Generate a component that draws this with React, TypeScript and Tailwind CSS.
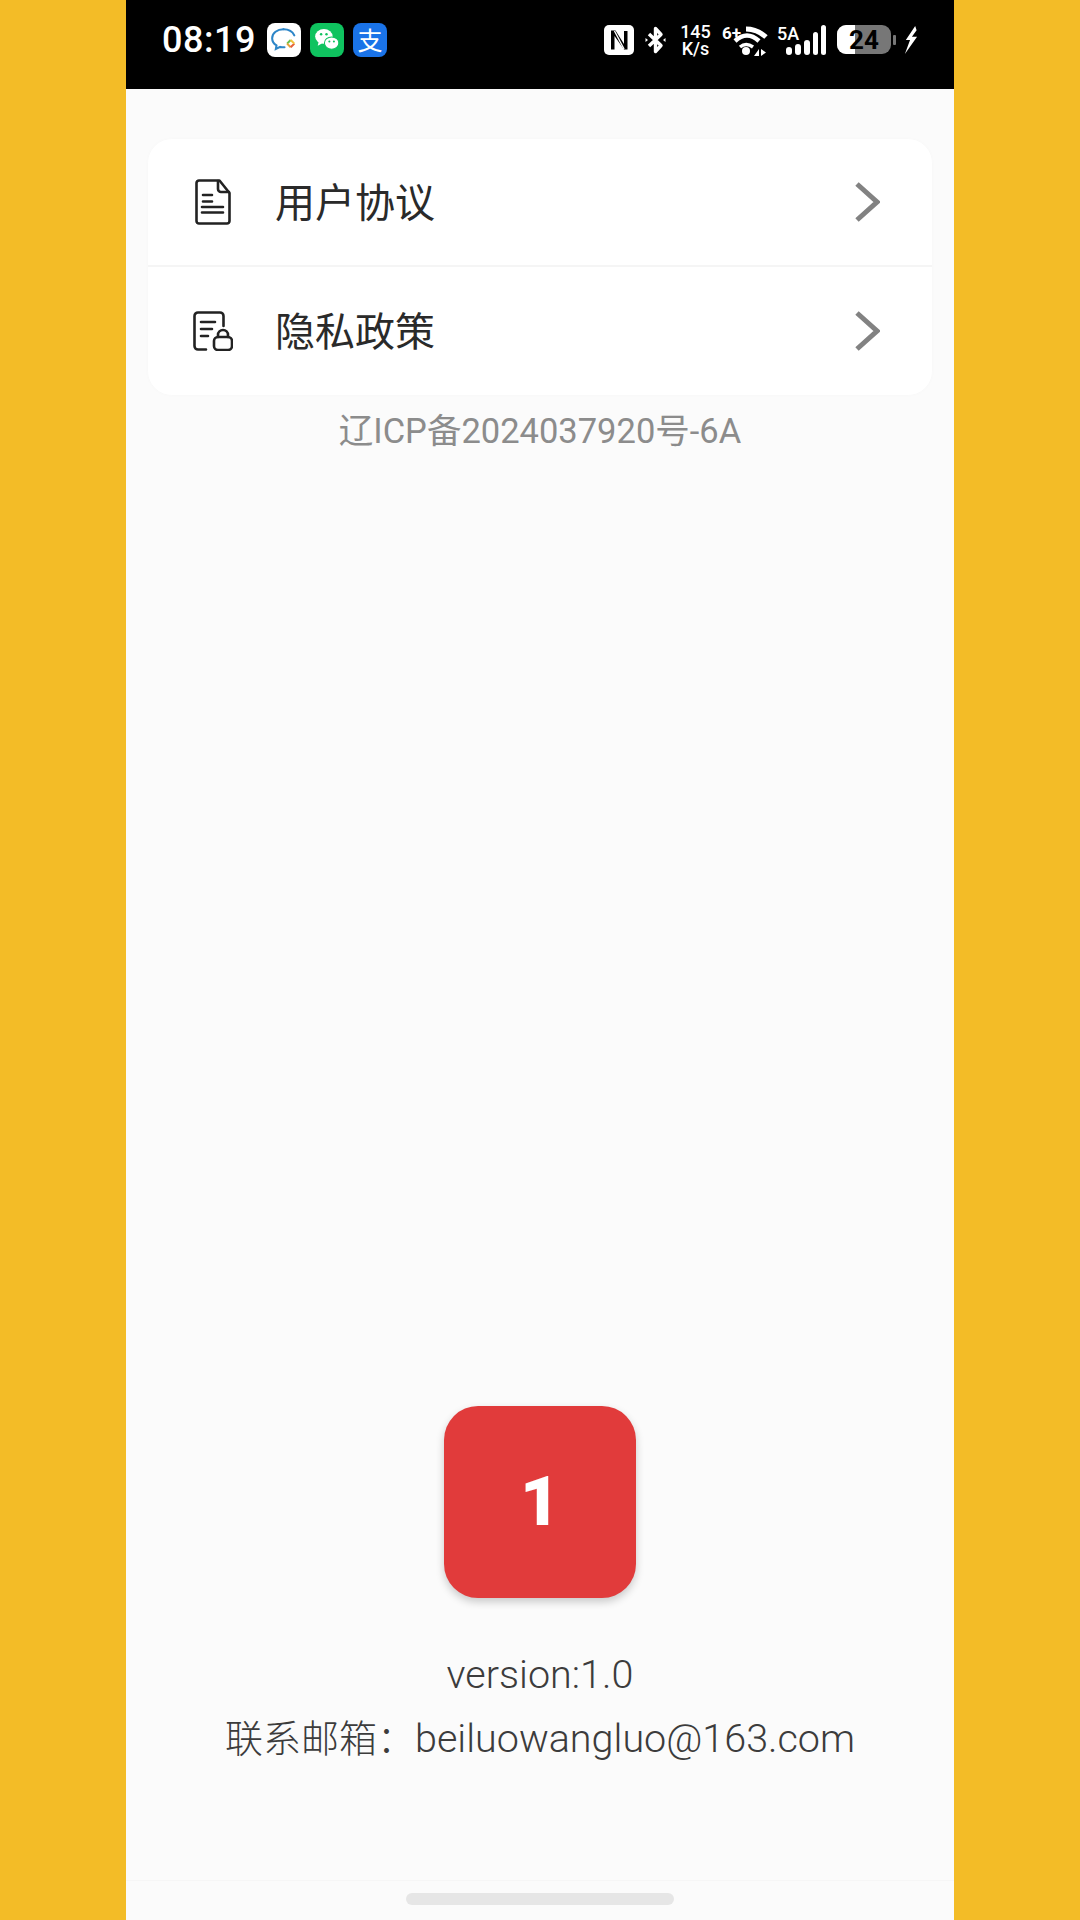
const cjk = "font-['Roboto','Noto_Sans_CJK_SC',sans-serif]";

function ChatApp() {
  return (
    <div className="w-[34px] h-[34px] rounded-[8px] bg-white">
      <svg viewBox="0 0 33 33" className="w-[34px] h-[34px]">
        <path d="M16 6c-6 0-11 3.600-11 8.800 0 3 1.700 5.400 4.200 7l-.6 3.400 4.200-2c1.300.3 2.700.4 4.200.4" fill="none" stroke="#2d86c8" strokeWidth="2" strokeLinecap="round" />
        <path d="M16 6c5 0 9 2.500 10.500 6" fill="none" stroke="#2d86c8" strokeWidth="2" strokeLinecap="round" />
        <path d="M23 16.500l-3.500 3.500" stroke="#6cc04a" strokeWidth="2" />
        <path d="M19.500 20l3.500 3.500" stroke="#e8a33a" strokeWidth="2" />
        <path d="M23 23.500l3.500-3.500" stroke="#e5603a" strokeWidth="2" />
        <path d="M26.500 20L23 16.500" stroke="#f0c43a" strokeWidth="2" />
      </svg>
    </div>
  );
}

function WeChatApp() {
  return (
    <div className="w-[34px] h-[34px] rounded-[8px] bg-[#0fc35f]">
      <svg viewBox="0 0 33 33" className="w-[34px] h-[34px]">
        <ellipse cx="13.500" cy="13" rx="8.500" ry="7.200" fill="#fff" />
        <path d="M8.500 18l-1 4 4-2z" fill="#fff" />
        <ellipse cx="21" cy="19.500" rx="7" ry="6" fill="#fff" stroke="#0fc35f" strokeWidth="1" />
        <circle cx="10.800" cy="11" r="1.200" fill="#0fc35f" />
        <circle cx="16" cy="11" r="1.200" fill="#0fc35f" />
        <circle cx="18.800" cy="18" r="1" fill="#0fc35f" />
        <circle cx="23.200" cy="18" r="1" fill="#0fc35f" />
      </svg>
    </div>
  );
}

function AlipayApp() {
  return (
    <div className="w-[34px] h-[34px] rounded-[8px] bg-[#1a73e8] flex items-center justify-center text-white text-[25px] leading-none font-['Noto_Sans_CJK_SC',sans-serif]">
      支
    </div>
  );
}

function NfcIcon() {
  return (
    <svg viewBox="0 0 30 30" className="w-[30px] h-[30px]">
      <rect width="30" height="30" rx="5" fill="#fff" />
      <path d="M7 5.500h4.500L20 19V6h3.500v18.500H20L10.500 11v13.500H7z" fill="#000" />
      <path d="M10.500 6L20 24" stroke="#fff" strokeWidth="1.400" />
    </svg>
  );
}

function BluetoothIcon() {
  return (
    <svg viewBox="0 0 21 30" className="w-[21px] h-[30px]">
      <path d="M4 9l12 11.500-5.500 6V3.500L16 9.500 4 21" fill="none" stroke="#fff" strokeWidth="3.400" strokeLinejoin="round" />
      <path d="M0.500 13v4l2.500-2zM20.500 13v4l-2.500-2z" fill="#fff" />
    </svg>
  );
}

function WifiIcon() {
  return (
    <svg viewBox="0 0 46 32" className="w-[46px] h-[32px]">
      <path d="M24 5Q35 5 44 13" fill="none" stroke="#fff" strokeWidth="5" />
      <path d="M13 17Q25 6 37 17" fill="none" stroke="#fff" strokeWidth="4.500" />
      <path d="M18 23Q24 18 31 23" fill="none" stroke="#fff" strokeWidth="3.500" />
      <circle cx="24" cy="27" r="4" fill="#fff" />
      <path d="M37 25v7h-5zM39 25v7l5-3.500z" fill="#fff" />
    </svg>
  );
}

function SignalBars() {
  return (
    <div className="flex items-end gap-[3px] h-[30px]">
      <div className="w-[6px] h-[8px] rounded-[3px] bg-white" />
      <div className="w-[6px] h-[11px] rounded-[3px] bg-white" />
      <div className="w-[6px] h-[15px] rounded-[3px] bg-white" />
      <div className="w-[5px] h-[23px] rounded-[3px] bg-white" />
      <div className="w-[5px] h-[30px] rounded-[3px] bg-white" />
    </div>
  );
}

function Battery() {
  return (
    <div className="flex items-center gap-[2px]">
      <div className="relative w-[54px] h-[29px] rounded-[9px] bg-[#777] overflow-hidden">
        <div className="absolute left-0 top-0 bottom-0 w-[18px] bg-white" />
        <span className="absolute inset-0 flex items-center justify-center text-[26px] font-bold text-black leading-none font-['Roboto',sans-serif]">24</span>
      </div>
      <div className="w-[3px] h-[10px] rounded-[1px] bg-[#777]" />
    </div>
  );
}

function Bolt() {
  return (
    <svg viewBox="0 0 16 30" className="w-[15px] h-[30px]">
      <path d="M13 0L3 15h4.500L2 30l13-18.500H9.500l5-7z" fill="#fff" />
    </svg>
  );
}

function StatusBar() {
  return (
    <div className="h-[89px] bg-black flex items-center pl-[36px] pr-[36px] pb-[10px] shrink-0 font-['Roboto',sans-serif]">
      <span className="w-[105px] text-white text-[36px] font-medium leading-none tracking-[0.5px]">08:19</span>
      <div className="flex items-center gap-[9px]">
        <ChatApp />
        <WeChatApp />
        <AlipayApp />
      </div>
      <div className="ml-auto flex items-center text-white">
        <NfcIcon />
        <div className="ml-[11px]"><BluetoothIcon /></div>
        <div className="ml-[13px] w-[33px] flex flex-col items-center text-[18px] font-medium leading-[17px]">
          <span>145</span>
          <span>K/s</span>
        </div>
        <div className="relative ml-[10px] w-[46px] h-[32px]">
          <span className="absolute left-0 top-[1px] text-[17px] font-bold leading-none">6+</span>
          <div className="absolute left-0 top-0"><WifiIcon /></div>
        </div>
        <div className="relative ml-[9px] w-[49px] h-[30px] flex justify-end">
          <span className="absolute left-0 top-0 text-[18px] font-medium leading-none">5A</span>
          <SignalBars />
        </div>
        <div className="ml-[11px]"><Battery /></div>
        <div className="ml-[7px]"><Bolt /></div>
      </div>
    </div>
  );
}

function DocIcon() {
  return (
    <svg viewBox="0 0 36 46" className="w-[36px] h-[46px]" fill="none" stroke="#222" strokeWidth="2.600" strokeLinecap="round" strokeLinejoin="round">
      <path d="M4 1.500h20.500L34.500 14v28a2.500 2.500 0 0 1-2.500 2.500H4A2.500 2.500 0 0 1 1.500 42V4A2.500 2.500 0 0 1 4 1.500z" />
      <path d="M23 2v8a3 3 0 0 0 3 3h8" />
      <path d="M8 16h9M8 22.500h9M7 28h21M7 33.500h21" />
    </svg>
  );
}

function LockDocIcon() {
  return (
    <svg viewBox="0 0 40 40" className="w-[40px] h-[40px]" fill="none" stroke="#222" strokeWidth="2.600" strokeLinecap="round" strokeLinejoin="round">
      <path d="M13 38.500H5A3.500 3.500 0 0 1 1.500 35V5A3.500 3.500 0 0 1 5 1.500h22A3.500 3.500 0 0 1 30.500 5v10" />
      <path d="M8 11h14M8 18h11M8 25h7" />
      <rect x="21" y="26" width="18" height="13" rx="4" />
      <path d="M25 26v-2a5 5 0 0 1 10 0v2" />
    </svg>
  );
}

function Chevron() {
  return (
    <svg viewBox="0 0 26 42" className="w-[26px] h-[42px]" fill="none" stroke="#828282" strokeWidth="5">
      <path d="M3 3l20 18L3 39" />
    </svg>
  );
}

function Row({ icon, label, border }: { icon: React.ReactNode; label: string; border?: boolean }) {
  return (
    <div className={`flex items-center h-[128px] pl-[45px] pr-[52px] ${border ? "border-b-2 border-[#f5f5f5]" : ""}`}>
      <div className="w-[40px] flex justify-center">{icon}</div>
      <span className="ml-[42px] pb-[4px] text-[40px] leading-none text-[#2a2a2a] font-['Noto_Sans_CJK_SC',sans-serif]">{label}</span>
      <div className="ml-auto"><Chevron /></div>
    </div>
  );
}

export default function App() {
  return (
    <div className="w-[1080px] h-[1920px] bg-[#f3bc27] flex justify-center">
      <div className="w-[828px] h-full bg-[#fbfbfb] flex flex-col">
        <StatusBar />
        <div className="flex-1 flex flex-col">
          <div className="mt-[50px] mx-[22px] bg-white rounded-[24px] shadow-[0_0_4px_rgba(0,0,0,0.02)]">
            <Row icon={<DocIcon />} label="用户协议" border />
            <Row icon={<LockDocIcon />} label="隐私政策" />
          </div>
          <p className={`mt-[14px] text-center text-[34.500px] leading-[44px] text-[#8c8c8c] ${cjk}`}>辽ICP备2024037920号-6A</p>
          <div className="mt-auto flex flex-col items-center">
            <div className="w-[192px] h-[192px] rounded-[34px] bg-[#e13b3b] shadow-[0_4px_8px_rgba(0,0,0,0.2)] flex items-center justify-center">
              <span className="pb-[2px] text-white text-[69px] font-black leading-none font-['Roboto',sans-serif]">1</span>
            </div>
            <p className={`mt-[45px] text-[39.500px] leading-[64px] text-[#3c3c3c] font-light ${cjk}`}>version:1.0</p>
            <p className={`text-[39.500px] leading-[64px] text-[#3c3c3c] font-light ${cjk}`}>
              <span className="text-[38px] leading-none font-light font-['Noto_Sans_CJK_SC',sans-serif]">联系邮箱：</span>beiluowangluo@163.com
            </p>
          </div>
          <div className="mt-[109px] h-[1px] bg-[#f6f6f6]" />
        </div>
        <div className="h-[39px] shrink-0 flex justify-center pt-[12px]">
          <div className="w-[268px] h-[12px] rounded-full bg-[#e6e6e6]" />
        </div>
      </div>
    </div>
  );
}
